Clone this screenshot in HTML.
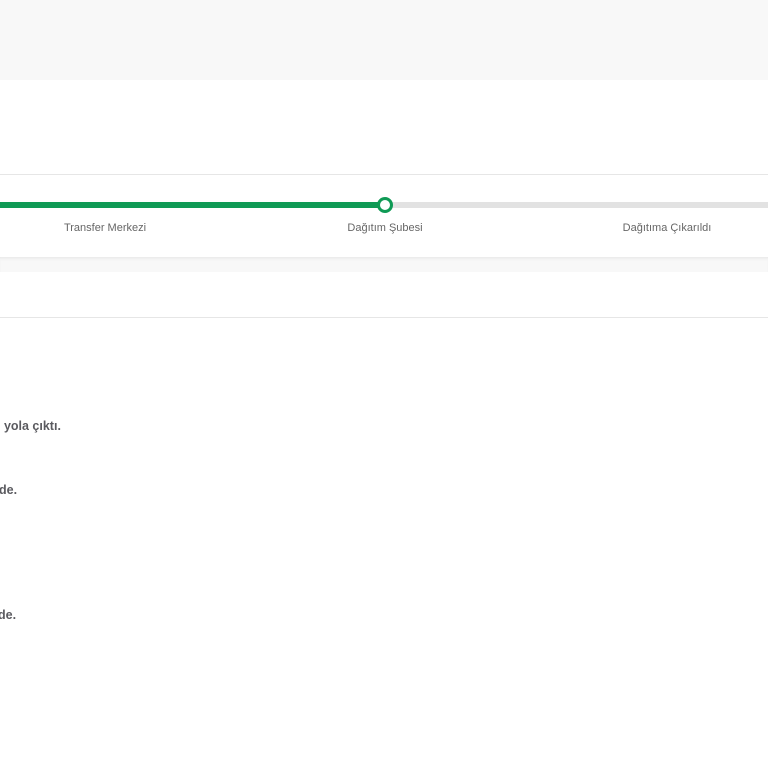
<!DOCTYPE html>
<html><head><meta charset="utf-8"><style>
body{margin:0;width:768px;height:768px;overflow:hidden;background:#fff;font-family:"Liberation Sans",sans-serif;position:relative}
.a{position:absolute}
.lbl{position:absolute;top:222px;font-size:11px;color:#666;transform:translateX(-50%);white-space:nowrap}
.t{position:absolute;font-size:12.5px;font-weight:bold;color:#5a5a5f;white-space:nowrap}
</style></head><body>
<div class="a" style="left:0;top:0;width:768px;height:80px;background:#f8f8f8"></div>
<div class="a" style="left:0;top:174px;width:768px;height:1px;background:#e6e6e6"></div>
<div class="a" style="left:0;top:257px;width:768px;height:15px;background:#f8f8f8;box-shadow:inset 0 3px 3px -2px #e4e4e4"></div>
<div class="a" style="left:0;top:202px;width:768px;height:6px;background:#e2e2e2"></div>
<div class="a" style="left:0;top:202px;width:385px;height:6px;background:#0f9a55"></div>
<div class="a" style="left:377px;top:197px;width:10px;height:10px;border:3px solid #0f9a55;border-radius:50%;background:#fff"></div>
<div class="lbl" style="left:105px">Transfer Merkezi</div>
<div class="lbl" style="left:385px">Dağıtım Şubesi</div>
<div class="lbl" style="left:667px">Dağıtıma Çıkarıldı</div>
<div class="a" style="left:0;top:317px;width:768px;height:1px;background:#e6e6e6"></div>
<div class="t" style="left:-3px;top:419px">ı yola çıktı.</div>
<div class="t" style="left:-1px;top:483px">de.</div>
<div class="t" style="left:-2px;top:608px">de.</div>
</body></html>
